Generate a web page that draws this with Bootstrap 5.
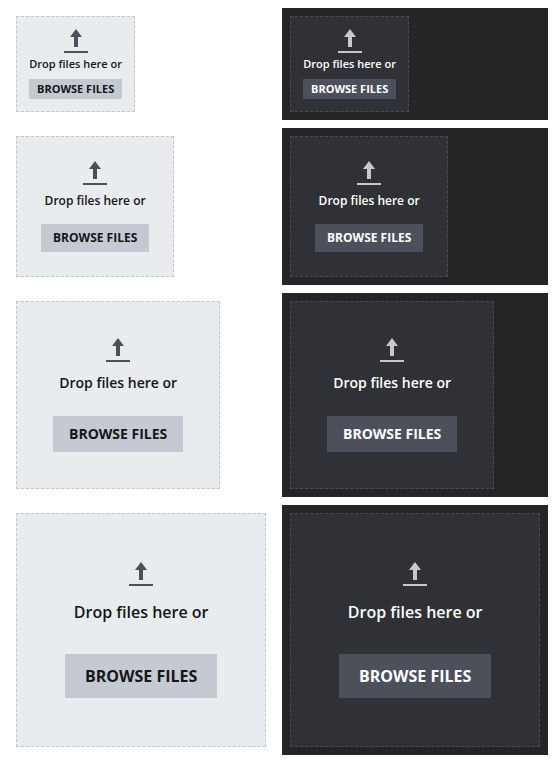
<!DOCTYPE html>
<html lang="en">
<head>
<meta charset="utf-8">
<meta name="viewport" content="width=device-width, initial-scale=1">
<title>File drop zones</title>
<link href="https://cdn.jsdelivr.net/npm/bootstrap@5.3.0/dist/css/bootstrap.min.css" rel="stylesheet">
<style>
body { font-family: "Open Sans", sans-serif; background: #fff; }
.zone-grid { display: grid; grid-template-columns: repeat(2, minmax(0, 1fr)); gap: 8px; padding: 8px 7px 8px 8px; }
.panel { padding: 8px; --zone-bg: #e8ecef; --zone-line: #c4c8cc; --zone-ink: #151618; --zone-icon: #4c505b; --zone-btn: #c5c9d1; }
.panel-night { background: #242527; --zone-bg: #303136; --zone-line: #494b50; --zone-ink: #fff; --zone-icon: #c5c9cf; --zone-btn: #4c505b; }
.dropzone { background: var(--zone-bg); border: 1px dashed var(--zone-line); color: var(--zone-ink); padding: var(--pad); font-size: var(--size); }
.dropzone svg { width: 24px; height: 24px; fill: var(--zone-icon); }
.prompt { font-weight: 600; line-height: var(--line); margin: var(--above) 0 var(--below); white-space: nowrap; }
.browse { --bs-btn-font-size: var(--size); --bs-btn-font-weight: 700; --bs-btn-line-height: 20px; --bs-btn-padding-x: var(--bpx); --bs-btn-padding-y: var(--bpy); --bs-btn-color: var(--zone-ink); --bs-btn-bg: var(--zone-btn); --bs-btn-hover-color: var(--zone-ink); --bs-btn-hover-bg: var(--zone-btn); --bs-btn-border-width: 0; white-space: nowrap; }
.zone-xs { --size: 11px; --pad: 12px; --line: 20px; --above: 1px; --below: 5px; --bpx: 8px; --bpy: 0px; }
.zone-sm { --size: 12px; --pad: 24px; --line: 20px; --above: 6px; --below: 13px; --bpx: 12px; --bpy: 4px; }
.zone-md { --size: 14px; --pad: 36px; --line: 22px; --above: 10px; --below: 22px; --bpx: 16px; --bpy: 8px; }
.zone-lg { --size: 16px; --pad: 48px; --line: 24px; --above: 14px; --below: 30px; --bpx: 20px; --bpy: 12px; }
</style>
<script src="https://cdn.jsdelivr.net/npm/bootstrap@5.3.0/dist/js/bootstrap.bundle.min.js"></script>
</head>
<body>
<svg class="d-none" aria-hidden="true"><symbol id="upload" viewBox="0 0 24 24"><path d="M12 0 18 8H14V18H10V8H6ZM0 22H24V24H0Z"/></symbol></svg>
<main class="zone-grid">
  <section class="panel d-flex align-items-start"><div class="dropzone zone-xs d-flex flex-column align-items-center"><svg aria-hidden="true"><use href="#upload"/></svg><p class="prompt">Drop files here or</p><button type="button" class="btn browse rounded-0">BROWSE FILES</button></div></section>
  <section class="panel panel-night d-flex align-items-start"><div class="dropzone zone-xs d-flex flex-column align-items-center"><svg aria-hidden="true"><use href="#upload"/></svg><p class="prompt">Drop files here or</p><button type="button" class="btn browse rounded-0">BROWSE FILES</button></div></section>
  <section class="panel d-flex align-items-start"><div class="dropzone zone-sm d-flex flex-column align-items-center"><svg aria-hidden="true"><use href="#upload"/></svg><p class="prompt">Drop files here or</p><button type="button" class="btn browse rounded-0">BROWSE FILES</button></div></section>
  <section class="panel panel-night d-flex align-items-start"><div class="dropzone zone-sm d-flex flex-column align-items-center"><svg aria-hidden="true"><use href="#upload"/></svg><p class="prompt">Drop files here or</p><button type="button" class="btn browse rounded-0">BROWSE FILES</button></div></section>
  <section class="panel d-flex align-items-start"><div class="dropzone zone-md d-flex flex-column align-items-center"><svg aria-hidden="true"><use href="#upload"/></svg><p class="prompt">Drop files here or</p><button type="button" class="btn browse rounded-0">BROWSE FILES</button></div></section>
  <section class="panel panel-night d-flex align-items-start"><div class="dropzone zone-md d-flex flex-column align-items-center"><svg aria-hidden="true"><use href="#upload"/></svg><p class="prompt">Drop files here or</p><button type="button" class="btn browse rounded-0">BROWSE FILES</button></div></section>
  <section class="panel d-flex align-items-start"><div class="dropzone zone-lg d-flex flex-column align-items-center"><svg aria-hidden="true"><use href="#upload"/></svg><p class="prompt">Drop files here or</p><button type="button" class="btn browse rounded-0">BROWSE FILES</button></div></section>
  <section class="panel panel-night d-flex align-items-start"><div class="dropzone zone-lg d-flex flex-column align-items-center"><svg aria-hidden="true"><use href="#upload"/></svg><p class="prompt">Drop files here or</p><button type="button" class="btn browse rounded-0">BROWSE FILES</button></div></section>
</main>
</body>
</html>
